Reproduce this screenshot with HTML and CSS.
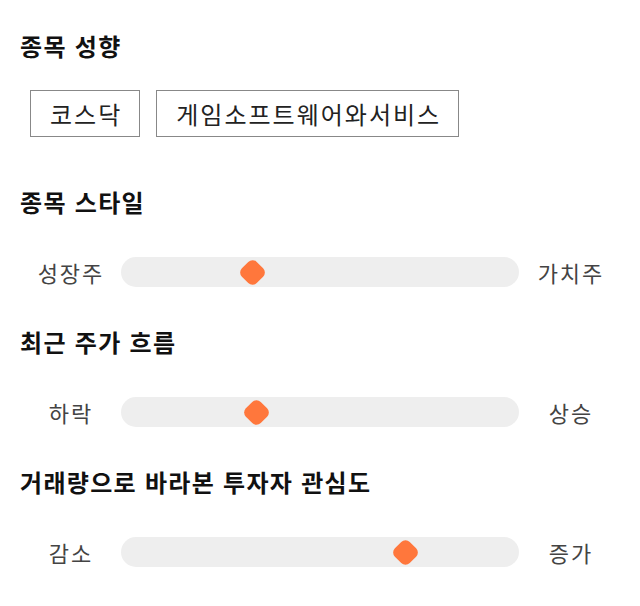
FILE: index.html
```html
<!DOCTYPE html>
<html lang="ko">
<head>
<meta charset="utf-8">
<link rel="stylesheet" href="styles.css">
</head>
<body>
<main class="page">
  <section class="section section-chips">
    <h2 class="title">종목 성향</h2>
    <div class="chips">
      <span class="chip">코스닥</span>
      <span class="chip">게임소프트웨어와서비스</span>
    </div>
  </section>
  <section class="section">
    <h2 class="title">종목 스타일</h2>
    <div class="scale">
      <span class="label">성장주</span>
      <div class="track"><span class="thumb" style="left:33%"></span></div>
      <span class="label">가치주</span>
    </div>
  </section>
  <section class="section">
    <h2 class="title">최근 주가 흐름</h2>
    <div class="scale">
      <span class="label">하락</span>
      <div class="track"><span class="thumb" style="left:34%"></span></div>
      <span class="label">상승</span>
    </div>
  </section>
  <section class="section">
    <h2 class="title">거래량으로 바라본 투자자 관심도</h2>
    <div class="scale">
      <span class="label">감소</span>
      <div class="track"><span class="thumb" style="left:71.5%"></span></div>
      <span class="label">증가</span>
    </div>
  </section>
</main>
</body>
</html>
```

FILE: styles.css
```css
* { box-sizing: border-box; }
html, body { margin: 0; padding: 0; background: #fff; }
body {
  font-family: "Noto Sans CJK KR", "Noto Sans", sans-serif;
  color: #111;
}
.page {
  padding: 28px 20px 0 20px;
  display: flex;
  flex-direction: column;
}
.section {
  display: flex;
  flex-direction: column;
  gap: 36px;
  margin-bottom: 38px;
}
.section-chips {
  gap: 26px;
  margin-bottom: 47px;
}
.title {
  margin: 0;
  font-size: 24px;
  line-height: 36px;
  font-weight: 700;
  color: #111;
  letter-spacing: 1.3px;
  padding-left: 0;
}
.chips {
  display: flex;
  gap: 16px;
  padding-left: 10px;
}
.chip {
  display: inline-flex;
  align-items: center;
  height: 47px;
  padding: 0 17px 0 19px;
  border: 1px solid #888;
  font-size: 24px;
  letter-spacing: 2px;
  color: #222;
}
.scale {
  display: grid;
  grid-template-columns: 100px 1fr 100px;
  align-items: center;
  height: 30px;
}
.label {
  text-align: center;
  font-size: 22px;
  letter-spacing: 2px;
  padding-left: 2px;
  color: #444;
}
.track {
  position: relative;
  height: 30px;
  margin: 0 1px 0 1px;
  border-radius: 15px;
  background: #eeeeee;
}
.thumb {
  position: absolute;
  top: 50%;
  width: 21px;
  height: 21px;
  margin-left: -10.5px;
  margin-top: -10.5px;
  background: #ff773c;
  border-radius: 6px;
  transform: rotate(45deg);
}
```
